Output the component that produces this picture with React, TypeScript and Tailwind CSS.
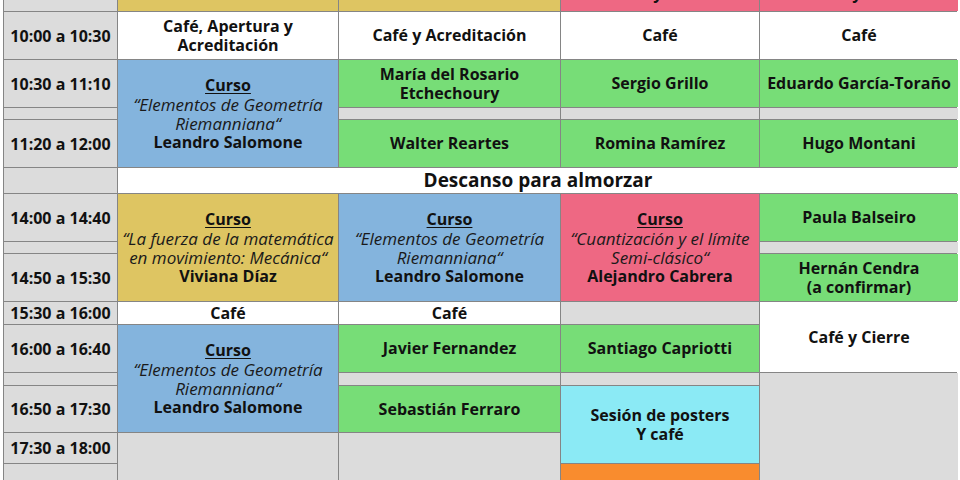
import type { ReactNode } from 'react';

const GRAY = 'bg-[#dcdcdc]';
const WHITE = 'bg-white';
const GREEN = 'bg-[#77dd77]';
const BLUE = 'bg-[#84b4dd]';
const YELLOW = 'bg-[#dec562]';
const PINK = 'bg-[#ee6883]';
const CYAN = 'bg-[#8beaf5]';
const ORANGE = 'bg-[#f98c2e]';

interface CellProps {
  bg: string;
  span?: string;
  children?: ReactNode;
}

const Cell = ({ bg, span = '', children }: CellProps) => (
  <div className={`${bg} ${span} flex items-center justify-center text-center overflow-hidden`}>
    {children}
  </div>
);

const Time = ({ label }: { label?: string }) => (
  <Cell bg={GRAY}>
    {label && <span className="font-bold">{label}</span>}
  </Cell>
);

const Name = ({ children }: { children: ReactNode }) => (
  <span className="font-bold leading-[19px]">{children}</span>
);

interface CourseProps {
  title: ReactNode;
  teacher: string;
}

const Course = ({ title, teacher }: CourseProps) => (
  <div className="flex flex-col items-center leading-[19px]">
    <span className="font-bold underline underline-offset-2">Curso</span>
    <span className="italic text-[17px] text-[#1a1a1a]">{title}</span>
    <span className="font-bold">{teacher}</span>
  </div>
);

// header row is cut by the top of the screenshot, only glyph bottoms show
const Clipped = ({ text }: { text: string }) => (
  <span className="block self-start font-bold leading-[18px] -mt-[16px]">{text}</span>
);

const App = () => {
  return (
    <div className="w-[960px] h-[480px] overflow-hidden bg-white text-[#111] text-[16px] font-['Open_Sans',sans-serif]">
      <div className="ml-[3px] w-[954px] grid gap-px bg-[#858585] border-x border-[#858585] grid-cols-[113px_220px_221px_198px_198px] grid-rows-[11px_47px_47px_11px_47px_25px_47px_11px_47px_22px_47px_12px_46px_30px_30px]">
        {/* header (cut) */}
        <Time />
        <Cell bg={YELLOW}><Clipped text="Mañana" /></Cell>
        <Cell bg={YELLOW}><Clipped text="Mañana" /></Cell>
        <Cell bg={PINK}><Clipped text="Sesión y debate" /></Cell>
        <Cell bg={PINK}><Clipped text="Sesión y debate" /></Cell>

        {/* 10:00 */}
        <Time label="10:00 a 10:30" />
        <Cell bg={WHITE}><Name>Café, Apertura y<br />Acreditación</Name></Cell>
        <Cell bg={WHITE}><Name>Café y Acreditación</Name></Cell>
        <Cell bg={WHITE}><Name>Café</Name></Cell>
        <Cell bg={WHITE}><Name>Café</Name></Cell>

        {/* 10:30 */}
        <Time label="10:30 a 11:10" />
        <Cell bg={BLUE} span="row-span-3">
          <Course title={<>“Elementos de Geometría<br />Riemanniana“</>} teacher="Leandro Salomone" />
        </Cell>
        <Cell bg={GREEN}><Name>María del Rosario<br />Etchechoury</Name></Cell>
        <Cell bg={GREEN}><Name>Sergio Grillo</Name></Cell>
        <Cell bg={GREEN}><Name>Eduardo García-Toraño</Name></Cell>

        <Time />
        <Cell bg={GRAY} />
        <Cell bg={GRAY} />
        <Cell bg={GRAY} />

        {/* 11:20 */}
        <Time label="11:20 a 12:00" />
        <Cell bg={GREEN}><Name>Walter Reartes</Name></Cell>
        <Cell bg={GREEN}><Name>Romina Ramírez</Name></Cell>
        <Cell bg={GREEN}><Name>Hugo Montani</Name></Cell>

        {/* lunch */}
        <Time />
        <Cell bg={WHITE} span="col-span-4">
          <span className="font-bold text-[19px]">Descanso para almorzar</span>
        </Cell>

        {/* 14:00 */}
        <Time label="14:00 a 14:40" />
        <Cell bg={YELLOW} span="row-span-3">
          <Course title={<>“La fuerza de la matemática<br />en movimiento: Mecánica“</>} teacher="Viviana Díaz" />
        </Cell>
        <Cell bg={BLUE} span="row-span-3">
          <Course title={<>“Elementos de Geometría<br />Riemanniana“</>} teacher="Leandro Salomone" />
        </Cell>
        <Cell bg={PINK} span="row-span-3">
          <Course title={<>“Cuantización y el límite<br />Semi-clásico“</>} teacher="Alejandro Cabrera" />
        </Cell>
        <Cell bg={GREEN}><Name>Paula Balseiro</Name></Cell>

        <Time />
        <Cell bg={GRAY} />

        {/* 14:50 */}
        <Time label="14:50 a 15:30" />
        <Cell bg={GREEN}><Name>Hernán Cendra<br />(a confirmar)</Name></Cell>

        {/* 15:30 */}
        <Time label="15:30 a 16:00" />
        <Cell bg={WHITE}><Name>Café</Name></Cell>
        <Cell bg={WHITE}><Name>Café</Name></Cell>
        <Cell bg={GRAY} />
        <Cell bg={WHITE} span="row-span-2"><Name>Café y Cierre</Name></Cell>

        {/* 16:00 */}
        <Time label="16:00 a 16:40" />
        <Cell bg={BLUE} span="row-span-3">
          <Course title={<>“Elementos de Geometría<br />Riemanniana“</>} teacher="Leandro Salomone" />
        </Cell>
        <Cell bg={GREEN}><Name>Javier Fernandez</Name></Cell>
        <Cell bg={GREEN}><Name>Santiago Capriotti</Name></Cell>

        <Time />
        <Cell bg={GRAY} />
        <Cell bg={GRAY} />
        <Cell bg={GRAY} span="row-span-4" />

        {/* 16:50 */}
        <Time label="16:50 a 17:30" />
        <Cell bg={GREEN}><Name>Sebastián Ferraro</Name></Cell>
        <Cell bg={CYAN} span="row-span-2"><Name>Sesión de posters<br />Y café</Name></Cell>

        {/* 17:30 */}
        <Time label="17:30 a 18:00" />
        <Cell bg={GRAY} span="row-span-2" />
        <Cell bg={GRAY} span="row-span-2" />

        <Time />
        <Cell bg={ORANGE} />
      </div>
    </div>
  );
};

export default App;
